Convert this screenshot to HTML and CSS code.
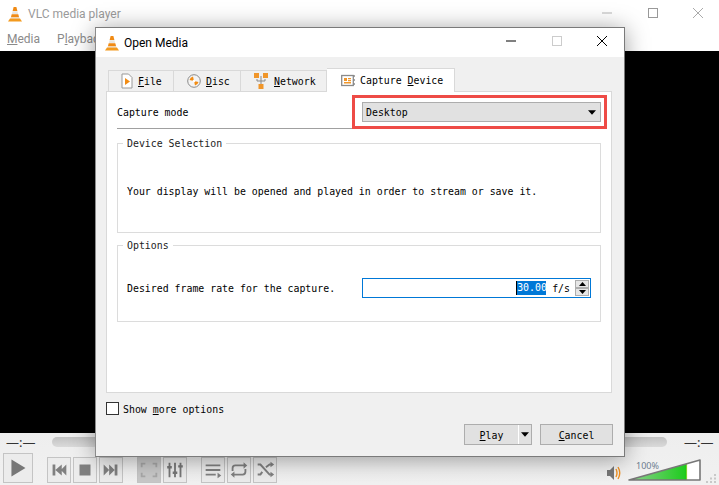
FILE: index.html
```html
<!DOCTYPE html>
<html lang="en">
<head>
<meta charset="utf-8">
<title>VLC media player - Open Media</title>
<link rel="stylesheet" href="styles.css">
</head>
<body>
<svg class="defs" width="0" height="0" aria-hidden="true">
  <symbol id="cone" viewBox="0 0 16 16">
    <path d="M6.6 1h2.8l1 4H5.6z" fill="#f08a14"/>
    <path d="M5.5 5.2h5l.7 3H4.8z" fill="#e9e6e0"/>
    <path d="M4.7 8.2h6.6l.8 3.4H3.9z" fill="#f08a14"/>
    <path d="M3.8 11.4h8.4l.4 1.4H3.4z" fill="#e9e6e0"/>
    <path d="M3 12.6h10l2 2.9H1z" fill="#f39a1e"/>
  </symbol>
</svg>

<div class="player">
  <header class="main-title">
    <svg class="cone"><use href="#cone"/></svg>
    <span class="main-title-text">VLC media player</span>
    <div class="win-buttons main-buttons">
      <svg viewBox="0 0 10 10"><path d="M0 5h10" stroke="#b5b5b5"/></svg>
      <svg viewBox="0 0 10 10"><rect x=".5" y=".5" width="9" height="9" fill="none" stroke="#999"/></svg>
      <svg viewBox="0 0 10 10"><path d="M0 0l10 10M10 0L0 10" stroke="#aaa"/></svg>
    </div>
  </header>
  <nav class="menu">
    <span><u>M</u>edia</span>
    <span>P<u>l</u>ayback</span>
  </nav>
  <div class="video"></div>
  <footer class="controls">
    <div class="seek-row">
      <span class="time">—:—</span>
      <div class="seek"></div>
      <span class="time">—:—</span>
    </div>
    <div class="button-row">
      <button class="ctl ctl-play"><svg viewBox="0 0 30 30"><path d="M8 6l15 9-15 9z" fill="#777"/></svg></button>
      <div class="ctl-group">
        <button class="ctl"><svg viewBox="0 0 24 24"><path d="M5 6h3v12H5zM8 12l7-6v12zM14 12l6-6v12z" fill="#808080"/></svg></button>
        <button class="ctl"><svg viewBox="0 0 24 24"><rect x="6" y="6" width="12" height="12" fill="#808080"/></svg></button>
        <button class="ctl"><svg viewBox="0 0 24 24"><path d="M4 6l6 6-6 6zM10 6l6 6-6 6zM16 6h3v12h-3z" fill="#808080"/></svg></button>
      </div>
      <div class="ctl-group">
        <button class="ctl ctl-off"><svg viewBox="0 0 24 24"><path d="M4 9V5h4M16 5h4v4M20 15v4h-4M8 19H4v-4" fill="none" stroke="#a8a8a8" stroke-width="2"/></svg></button>
        <button class="ctl"><svg viewBox="0 0 24 24"><path d="M6 4v16M12 4v16M18 4v16" stroke="#777" stroke-width="2"/><path d="M3.500 9h5M9.500 15h5M15.500 8h5" stroke="#777" stroke-width="2.500"/></svg></button>
      </div>
      <div class="ctl-group">
        <button class="ctl"><svg viewBox="0 0 24 24"><path d="M4 6h16v2H4zM4 11h16v2H4zM4 16h11v2H4z" fill="#808080"/><path d="M17 15l4 3-4 3z" fill="#808080"/></svg></button>
        <button class="ctl"><svg viewBox="0 0 24 24"><path d="M5 13v-3q0-3 3-3h10M19 11v3q0 3-3 3H6" fill="none" stroke="#808080" stroke-width="2"/><path d="M17 3.500l4 3.500-4 3.500zM7 13.500L3 17l4 3.500z" fill="#808080"/></svg></button>
        <button class="ctl"><svg viewBox="0 0 24 24"><path d="M4 6h3l10 11h2M4 17h3l2-3M13 9l4-3h2" fill="none" stroke="#808080" stroke-width="2.200"/><path d="M18 3l4 3-4 3zM18 14l4 3-4 3z" fill="#808080"/></svg></button>
      </div>
      <div class="volume">
        <svg class="speaker" viewBox="0 0 14 16"><path d="M0 5h3l4-4v14l-4-4H0z" fill="#777"/><path d="M9 4q2 4 0 8M11 2q3.500 6 0 12" fill="none" stroke="#f09020" stroke-width="1.400"/></svg>
        <svg class="vol-bar" viewBox="0 0 73 22">
          <defs>
            <linearGradient id="vol" x1="0" x2="1" y1="0" y2="0">
              <stop offset="0" stop-color="#8fd08f"/>
              <stop offset=".78" stop-color="#20cc20"/>
              <stop offset=".8" stop-color="#18c818"/>
              <stop offset=".815" stop-color="#a8d838"/>
              <stop offset=".825" stop-color="#ffffff"/>
              <stop offset="1" stop-color="#ffffff"/>
            </linearGradient>
          </defs>
          <path d="M1 21L72 1v20z" fill="url(#vol)" stroke="#777" stroke-width="1.600" stroke-linejoin="round"/>
          <text class="vol-text" x="8" y="10">100%</text>
        </svg>
        <svg class="grip" viewBox="0 0 11 9"><path d="M8 0h2v2H8zM4 3.500h2v2H4zM8 3.500h2v2H8zM0 7h2v2H0zM4 7h2v2H4zM8 7h2v2H8z" fill="#c8c8c8"/></svg>
      </div>
    </div>
  </footer>

  <section class="dialog">
    <header class="dialog-title">
      <svg class="cone"><use href="#cone"/></svg>
      <span class="dialog-title-text">Open Media</span>
      <div class="win-buttons dialog-buttons">
        <svg viewBox="0 0 10 10"><path d="M0 5h10" stroke="#000"/></svg>
        <svg viewBox="0 0 10 10"><rect x=".5" y=".5" width="9" height="9" fill="none" stroke="#ccc"/></svg>
        <svg viewBox="0 0 10 10"><path d="M0 0l10 10M10 0L0 10" stroke="#000"/></svg>
      </div>
    </header>
    <div class="dialog-body">
      <div class="tabs">
        <div class="tab tab-file">
          <svg class="tab-icon" viewBox="0 0 12 16"><path d="M1 1h6.500L11 4.500V15H1z" fill="#fff" stroke="#999"/><path d="M4 5l5 3.500L4 12z" fill="#f28c14"/></svg>
          <span><u>F</u>ile</span>
        </div>
        <div class="tab tab-disc">
          <svg class="tab-icon" viewBox="0 0 14 14"><circle cx="7" cy="7" r="6.300" fill="#f4f4f4" stroke="#8a8a8a"/><path d="M7 7L2.500 6A4.600 4.600 0 0 1 6 2.500zM7 7l4.500 1A4.600 4.600 0 0 1 8 11.500z" fill="#f28c14"/><circle cx="7" cy="7" r="1.300" fill="#fff"/></svg>
          <span><u>D</u>isc</span>
        </div>
        <div class="tab tab-net">
          <svg class="tab-icon" viewBox="0 0 14 16"><path d="M7 3v10M3 6v2h8V6" fill="none" stroke="#888"/><rect x="0" y="0" width="5" height="5" fill="#f0962a"/><rect x="9" y="0" width="5" height="5" fill="#f0962a"/><rect x="4.500" y="11" width="5" height="5" fill="#f0962a"/></svg>
          <span><u>N</u>etwork</span>
        </div>
        <div class="tab tab-active">
          <svg class="tab-icon" viewBox="0 0 15 13"><rect x=".7" y="1.500" width="11.600" height="10" fill="#fff" stroke="#8a8a8a" stroke-width="1.300"/><path d="M3 4h3v3H3zM7 4h3v1.300H7zM7 6h3v1.300H7zM3 8h7v1.500H3z" fill="#f0962a"/><path d="M13 1v2M13 5v2M13 9v2" stroke="#8a8a8a" stroke-width="1.500"/></svg>
          <span>Capture <u>D</u>evice</span>
        </div>
      </div>
      <div class="pane">
        <div class="mode-row">
          <span class="mode-label">Capture mode</span>
          <div class="combo">
            <span>Desktop</span>
            <svg class="combo-arrow" viewBox="0 0 9 5"><path d="M0 0h9L4.500 5z" fill="#000"/></svg>
            <div class="highlight"></div>
          </div>
        </div>
        <fieldset class="group group-device">
          <legend>Device Selection</legend>
          <p class="group-line">Your display will be opened and played in order to stream or save it.</p>
        </fieldset>
        <fieldset class="group group-options">
          <legend>Options</legend>
          <div class="group-line rate-line">
            <span class="rate-label">Desired frame rate for the capture.</span>
            <div class="spin">
              <span class="spin-value">30.00</span>
              <span class="spin-unit">f/s</span>
              <div class="spin-buttons">
                <div class="spin-btn"><svg viewBox="0 0 7 4"><path d="M3.500 0L7 4H0z" fill="#000"/></svg></div>
                <div class="spin-btn"><svg viewBox="0 0 7 4"><path d="M0 0h7L3.500 4z" fill="#000"/></svg></div>
              </div>
            </div>
          </div>
        </fieldset>
      </div>
      <label class="more">
        <span class="checkbox"></span>
        <span class="more-text">Show <u>m</u>ore options</span>
      </label>
      <div class="actions">
        <div class="btn btn-play">
          <span class="btn-play-main"><u>P</u>lay</span>
          <span class="btn-play-arrow"><svg viewBox="0 0 9 5"><path d="M0 0h9L4.500 5z" fill="#000"/></svg></span>
        </div>
        <div class="btn btn-cancel"><span class="btn-cancel-text"><u>C</u>ancel</span></div>
      </div>
    </div>
  </section>
</div>
</body>
</html>
```
FILE: styles.css
```css
* { box-sizing: border-box; }
html, body { margin: 0; padding: 0; }
body { width: 719px; height: 485px; overflow: hidden; background: #fff; }
.defs { position: absolute; }

.player {
  position: relative;
  width: 719px;
  height: 485px;
  display: flex;
  flex-direction: column;
  font-family: Roboto, "Noto Sans", sans-serif;
  font-size: 12px;
  overflow: hidden;
}
u { text-underline-offset: 1px; }

/* main window */
.main-title {
  height: 27px;
  flex: none;
  display: flex;
  align-items: center;
  padding-left: 7px;
  background: #fff;
  color: #9a9a9a;
}
.cone { width: 16px; height: 16px; flex: none; }
.main-title-text { margin-left: 5px; }
.win-buttons { margin-left: auto; display: flex; align-items: center; }
.win-buttons svg { width: 10px; height: 10px; flex: none; display: block; }
.main-buttons { gap: 35.500px; padding-right: 16px; margin-top: -1px; }

.menu {
  height: 24px;
  flex: none;
  display: flex;
  gap: 17px;
  align-items: center;
  padding-left: 7px;
  background: #fff;
  color: #8a8a8a;
}
.video { flex: 1; background: #000; }

.controls {
  height: 52px;
  flex: none;
  background: linear-gradient(#eeeeee, #f1f1f1);
  padding: 4px 0 2px;
  display: flex;
  flex-direction: column;
  justify-content: space-between;
}
.seek-row { display: flex; align-items: center; height: 10px; padding: 0 5px 0 6px; }
.time { width: 30px; flex: none; color: #333; font-family: "Noto Sans", sans-serif; font-size: 13px; line-height: 10px; white-space: nowrap; }
.seek {
  flex: 1;
  height: 10px;
  margin: 0 17px 0 16px;
  border-radius: 5px;
  background: linear-gradient(#c2c2c2, #dadada);
}
.button-row { display: flex; align-items: flex-end; padding-left: 3px; }
.ctl {
  width: 24px;
  height: 26px;
  padding: 0;
  border: 1px solid #c4c4c4;
  background: #ececec;
  display: flex;
  align-items: center;
  justify-content: center;
}
.ctl svg { width: 22px; height: 22px; display: block; }
.ctl-play { width: 30px; height: 30px; }
.ctl-play svg { width: 28px; height: 28px; }
.ctl-off { background: #c8c8c8; }
.ctl-group { display: flex; gap: 2px; margin-left: 14px; }
.volume { margin-left: auto; display: flex; align-items: flex-end; }
.speaker { width: 14px; height: 16px; margin-bottom: 2px; }
.vol-bar { width: 73px; height: 22px; margin-left: 7px; margin-bottom: 2px; overflow: visible; }
.vol-text { font-family: "Noto Sans", sans-serif; font-size: 9px; fill: #6f7f90; }
.grip { width: 11px; height: 9px; margin-left: 5px; margin-right: 2px; }

/* dialog window */
.dialog {
  position: absolute;
  left: 95px;
  top: 27px;
  width: 530px;
  height: 430px;
  border: 1px solid #7a7a7a;
  border-left-color: #8c8c8c;
  background: #f0f0f0;
  box-shadow: 0 2px 22px rgba(0, 0, 0, .38);
  display: flex;
  flex-direction: column;
}
.dialog-title {
  height: 29px;
  flex: none;
  display: flex;
  align-items: center;
  background: #fff;
  padding-left: 8px;
  color: #000;
}
.dialog-title-text { margin-left: 4px; }
.dialog-buttons { gap: 35.500px; padding-right: 17px; margin-top: -3px; }

.dialog-body {
  flex: 1;
  display: flex;
  flex-direction: column;
  padding: 11px 12px 11px 10px;
  font-family: "DejaVu Sans Mono", "Liberation Mono", monospace;
  font-size: 9.900px;
  color: #000;
}

.tabs { display: flex; align-items: flex-end; height: 23px; padding-left: 2px; flex: none; position: relative; z-index: 1; }
.tab {
  height: 21px;
  display: flex;
  align-items: center;
  gap: 5px;
  padding-left: 13px;
  flex: none;
  background: #f0f0f0;
  border: 1px solid #d9d9d9;
  border-left-width: 0;
  border-bottom: 0;
}
.tab-file { width: 66px; padding-left: 12px; border-left-width: 1px; }
.tab-disc { width: 67px; }
.tab-net { width: 86px; gap: 6px; }
.tab-icon { flex: none; display: block; }
.tab-file .tab-icon { width: 12px; height: 16px; }
.tab-disc .tab-icon { width: 14px; height: 14px; }
.tab-net .tab-icon { width: 14px; height: 16px; }
.tab-active .tab-icon { width: 15px; height: 13px; }
.tab-active {
  width: 128px;
  height: 24px;
  margin-bottom: -1px;
  background: #fff;
  padding-left: 14px;
  gap: 4px;
  padding-bottom: 1px;
}

.pane {
  height: 302px;
  flex: none;
  background: #fff;
  border: 1px solid #d9d9d9;
  padding: 0 10px;
}
.mode-row {
  height: 37px;
  display: flex;
  align-items: flex-start;
  padding-top: 10px;
  border-bottom: 1px solid #a0a0a0;
}
.mode-label { width: 245px; flex: none; line-height: 20px; padding-top: 1px; }
.combo {
  position: relative;
  flex: 1;
  height: 20px;
  display: flex;
  align-items: center;
  justify-content: space-between;
  padding: 0 4px 0 3px;
  background: #e1e1e1;
  border: 1px solid #adadad;
}
.combo-arrow { width: 8px; height: 5px; display: block; }
.highlight {
  position: absolute;
  left: -11px;
  top: -8px;
  width: 255px;
  height: 33.500px;
  border: 3.500px solid #ee4b46;
}

.group {
  margin: 7px 0 0;
  padding: 0 9px;
  border: 1px solid #dcdcdc;
  min-width: 0;
}
.group legend { margin-left: -4px; padding: 2px 4px 0; line-height: 12px; color: #222; }
.group-line { margin: 0; display: flex; align-items: center; }
.group-device .group-line { height: 82px; padding-top: 1px; }
.group-options { margin-top: 5px; }
.group-options .group-line { height: 69px; padding-top: 3px; }
.rate-label { width: 235px; flex: none; }
.spin {
  width: 229px;
  height: 20px;
  flex: none;
  display: flex;
  align-items: center;
  justify-content: flex-end;
  border: 1.500px solid #0078d7;
  background: #fff;
  padding-right: 1px;
}
.spin-value { background: #0078d7; color: #fff; line-height: 14px; width: 30px; border-left: 1px solid #000; }
.spin-unit { margin-left: 6px; }
.spin-buttons { margin-left: 5px; width: 14px; height: 16px; display: flex; flex-direction: column; gap: 0; }
.spin-btn {
  flex: 1;
  background: #e6e6e6;
  border: 1px solid #adadad;
  display: flex;
  align-items: center;
  justify-content: center;
}
.spin-btn svg { width: 7px; height: 4px; display: block; }

.more { display: flex; align-items: center; gap: 4px; margin-top: 9px; height: 13px; flex: none; }
.more-text { padding-top: 1px; }
.checkbox { width: 13px; height: 13px; flex: none; background: #fff; border: 1px solid #333; }

.actions { display: flex; justify-content: flex-end; gap: 8px; margin-top: 9px; margin-right: -1px; }
.btn {
  height: 21px;
  border: 1px solid #adadad;
  background: #e1e1e1;
  display: flex;
  align-items: center;
}
.btn-play { width: 68px; }
.btn-play-main { flex: 1; text-align: center; padding-top: 1px; }
.btn-play-arrow {
  width: 13px;
  height: 19px;
  flex: none;
  border-left: 1px solid #fff;
  display: flex;
  align-items: center;
  justify-content: center;
}
.btn-play-arrow svg { width: 8px; height: 5px; display: block; }
.btn-cancel { width: 73px; justify-content: center; }
.btn-cancel-text { padding-top: 1px; }
```
